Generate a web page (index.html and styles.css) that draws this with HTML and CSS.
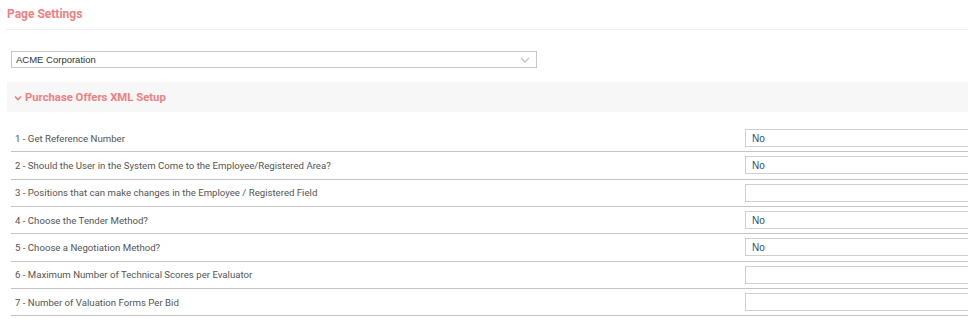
FILE: index.html
```html
<!DOCTYPE html>
<html>
<head>
<meta charset="utf-8">
<link rel="stylesheet" href="styles.css">
</head>
<body>
<div class="page">
  <div class="page-title">Page Settings</div>
  <div class="company-wrap">
    <div class="select">
      <span>ACME Corporation</span>
      <svg class="sel-chev" width="10" height="6" viewBox="0 0 10 6"><path d="M1 1l4 4 4-4" fill="none" stroke="#c4c4c4" stroke-width="1.3"/></svg>
    </div>
  </div>
  <div class="section-head">
    <svg class="sec-chev" width="8" height="6" viewBox="0 0 8 6"><path d="M1 1.5l3 3 3-3" fill="none" stroke="#f08080" stroke-width="1.6"/></svg>
    <span>Purchase Offers XML Setup</span>
  </div>
  <div class="rows">
    <div class="row"><div class="label">1 - Get Reference Number</div><div class="field">No</div></div>
    <div class="row"><div class="label">2 - Should the User in the System Come to the Employee/Registered Area?</div><div class="field">No</div></div>
    <div class="row"><div class="label">3 - Positions that can make changes in the Employee / Registered Field</div><div class="field"></div></div>
    <div class="row"><div class="label">4 - Choose the Tender Method?</div><div class="field">No</div></div>
    <div class="row"><div class="label">5 - Choose a Negotiation Method?</div><div class="field">No</div></div>
    <div class="row"><div class="label">6 - Maximum Number of Technical Scores per Evaluator</div><div class="field"></div></div>
    <div class="row"><div class="label">7 - Number of Valuation Forms Per Bid</div><div class="field"></div></div>
  </div>
</div>
</body>
</html>
```
FILE: styles.css
```css
html, body {
  margin: 0;
  padding: 0;
  background: #fff;
  overflow: hidden;
}
.page {
  width: 968px;
  padding-left: 6px;
  box-sizing: border-box;
  font-family: Roboto, "Liberation Sans", sans-serif;
}
.page-title {
  font-weight: bold;
  font-size: 12px;
  color: #f08080;
  padding: 7px 0 0 1px;
  height: 22px;
  border-bottom: 1px solid #f0f0f0;
}
.company-wrap {
  padding: 21px 0 0 5px;
  height: 31px;
}
.select {
  width: 526px;
  height: 17px;
  box-sizing: border-box;
  border: 1px solid #c8c8c8;
  display: flex;
  align-items: center;
  justify-content: space-between;
  padding: 0 6px 0 4px;
  font-family: "Liberation Sans", Arial, sans-serif;
  font-size: 9.5px;
  color: #333;
}
.section-head {
  margin-left: 1px;
  height: 30px;
  background: #f7f7f7;
  display: flex;
  align-items: center;
  padding-left: 7px;
  gap: 3px;
  font-weight: bold;
  font-size: 11.3px;
  color: #f08080;
}
.sec-chev { margin-top: 1px; }
.rows {
  margin-top: 13px;
  margin-left: 5px;
}
.row {
  display: flex;
  align-items: center;
  justify-content: space-between;
  padding: 4.17px 0;
  border-bottom: 1px solid #c4c4c4;
  height: 18px;
}
.row .label {
  padding-left: 4px;
  font-size: 9.65px;
  color: #555;
}
.field {
  width: 240px;
  flex: none;
  margin-right: -17px;
  height: 18px;
  box-sizing: border-box;
  border: 1px solid #cfcfcf;
  padding-left: 6px;
  display: flex;
  align-items: center;
  font-family: "Liberation Sans", Arial, sans-serif;
  font-size: 10px;
  color: #2e4e6b;
}
```
